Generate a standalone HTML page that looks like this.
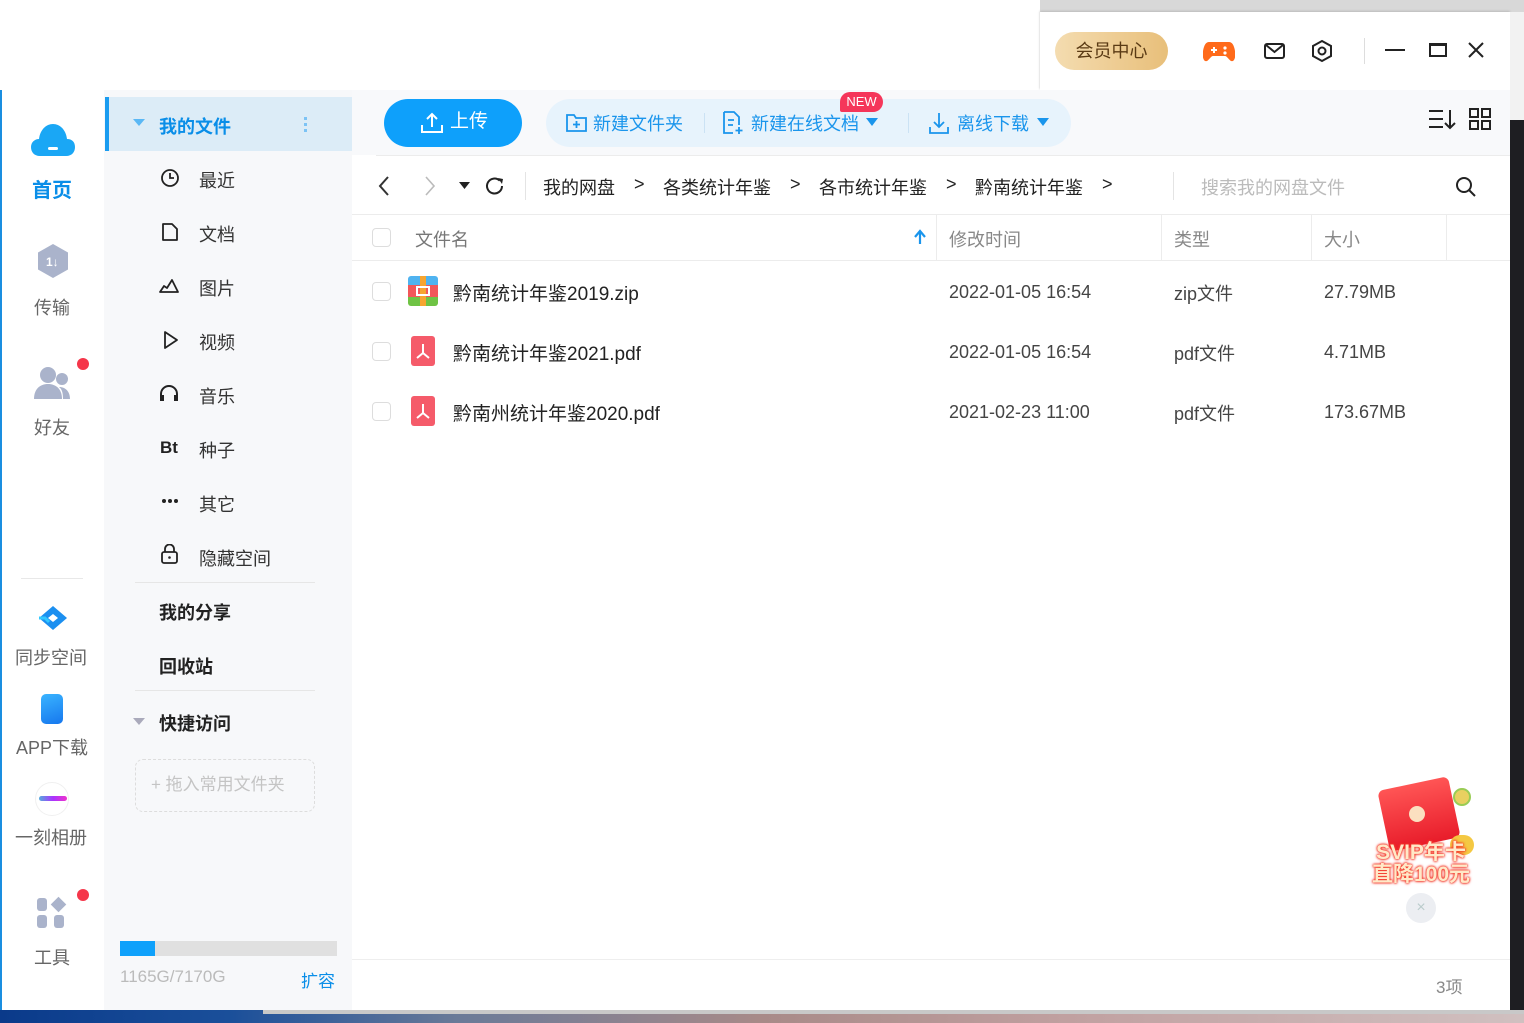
<!DOCTYPE html>
<html><head><meta charset="utf-8">
<style>
*{margin:0;padding:0;box-sizing:border-box}
body{width:1524px;height:1023px;overflow:hidden;background:#fff;font-family:"Liberation Sans","Noto Sans CJK SC",sans-serif;position:relative;color:#333}
.a{position:absolute;white-space:nowrap}
.f18{font-size:18px}
svg{position:absolute}
</style></head><body>
<!-- top area -->
<div class="a" style="left:1040px;top:0;width:484px;height:12px;background:#d8d8d8"></div>
<div class="a" style="left:1040px;top:12px;width:470px;height:78px;background:#fff;box-shadow:0 -1px 2px #bbb"></div>
<div class="a" style="left:1510px;top:12px;width:14px;height:110px;background:#f2f2f2"></div>
<div class="a" style="left:1510px;top:120px;width:14px;height:890px;background:#1e1e22"></div>
<div class="a" style="left:1055px;top:32px;width:113px;height:38px;border-radius:19px;background:linear-gradient(90deg,#f4dcb0,#e8bf7a);font-size:18px;line-height:38px;text-align:center;color:#5a3a14">会员中心</div>
<svg style="left:1203px;top:38px" width="32" height="26" viewBox="0 0 32 26"><path d="M6 4h20c3 0 5 3 6 9 1 7-1 11-4 10-2-1-4-5-6-5h-12c-2 0-4 4-6 5-3 1-5-3-4-10 1-6 3-9 6-9z" fill="#ff6a1a"/><path d="M8 12h6M11 9v6" stroke="#fff" stroke-width="2"/><circle cx="22" cy="10" r="1.6" fill="#fff"/><circle cx="22" cy="15" r="1.6" fill="#fff"/></svg>
<svg style="left:1264px;top:42px" width="22" height="18"><rect x="1" y="2" width="19" height="14" rx="2" fill="none" stroke="#222" stroke-width="2"/><path d="M2 3l8.5 7L19 3" fill="none" stroke="#222" stroke-width="2"/></svg>
<svg style="left:1310px;top:39px" width="24" height="24"><path d="M12 2l9 5v10l-9 5-9-5V7z" fill="none" stroke="#222" stroke-width="2"/><circle cx="12" cy="12" r="3.5" fill="none" stroke="#222" stroke-width="2"/></svg>
<div class="a" style="left:1364px;top:38px;width:1px;height:26px;background:#ddd"></div>
<div class="a" style="left:1385px;top:49px;width:20px;height:2px;background:#222"></div>
<div class="a" style="left:1429px;top:43px;width:18px;height:14px;border:2px solid #222;border-top-width:3px"></div>
<svg style="left:1467px;top:41px" width="18" height="18"><path d="M2 2l14 14M16 2L2 16" stroke="#222" stroke-width="2"/></svg>

<!-- left nav -->
<div class="a" style="left:0;top:90px;width:104px;height:920px;background:#fff;border-left:2px solid #1a8ee0"></div>
<svg style="left:30px;top:120px" width="46" height="40"><path d="M10 36c-6 0-9-4-9-9 0-5 4-8 8-8 1-9 7-15 14-15s13 6 14 15c5 0 8 3 8 8 0 5-3 9-9 9z" fill="#1aa7f5"/><rect x="18" y="27" width="10" height="3" rx="1.5" fill="#fff"/></svg>
<div class="a" style="left:32px;top:174px;font-size:20px;color:#0a8ee8;font-weight:bold">首页</div>
<svg style="left:35px;top:243px" width="36" height="36"><path d="M18 1l15 8.5v17L18 35 3 26.5v-17z" fill="#aab3cb"/><text x="11" y="23" fill="#fff" font-size="12" font-weight="bold" font-family="Liberation Sans">1↓</text></svg>
<div class="a f18" style="left:34px;top:294px;color:#666">传输</div>
<svg style="left:33px;top:365px" width="40" height="36"><circle cx="15" cy="10" r="8" fill="#aab3cb"/><path d="M1 34c0-10 6-15 14-15s14 5 14 15z" fill="#aab3cb"/><circle cx="29" cy="14" r="6" fill="#aab3cb"/><path d="M30 34c0-6-1-10-4-12 7 0 11 5 11 12z" fill="#aab3cb"/></svg>
<div class="a" style="left:77px;top:358px;width:12px;height:12px;border-radius:6px;background:#f5364a"></div>
<div class="a f18" style="left:34px;top:414px;color:#666">好友</div>
<div class="a" style="left:21px;top:578px;width:62px;height:1px;background:#e8e8e8"></div>
<svg style="left:37px;top:605px" width="32" height="26"><path d="M16 1l14 12-14 12L2 13z" fill="#1b8ff0"/><path d="M16 9l5 4-5 4-5-4z" fill="#fff"/><path d="M2 13l6 0 4 4" stroke="#33c8ff" stroke-width="3" fill="none"/></svg>
<div class="a f18" style="left:15px;top:644px;color:#666">同步空间</div>
<div class="a" style="left:41px;top:694px;width:22px;height:30px;border-radius:5px;background:linear-gradient(160deg,#3ab4ff,#1677ee)"></div>
<div class="a f18" style="left:16px;top:734px;color:#666">APP下载</div>
<div class="a" style="left:35px;top:782px;width:34px;height:34px;border-radius:17px;border:1px solid #f0f0f0"></div>
<div class="a" style="left:39px;top:796px;width:28px;height:5px;border-radius:3px;background:linear-gradient(90deg,#5ad,#a3f,#e3c)"></div>
<div class="a f18" style="left:15px;top:824px;color:#666">一刻相册</div>
<div class="a" style="left:37px;top:898px;width:10px;height:13px;border-radius:3px;background:#aab3cb"></div>
<div class="a" style="left:37px;top:915px;width:10px;height:13px;border-radius:3px;background:#aab3cb"></div>
<div class="a" style="left:54px;top:915px;width:10px;height:13px;border-radius:3px;background:#aab3cb"></div>
<div class="a" style="left:53px;top:899px;width:11px;height:11px;background:#aab3cb;transform:rotate(45deg)"></div>
<div class="a" style="left:77px;top:889px;width:12px;height:12px;border-radius:6px;background:#f5364a"></div>
<div class="a f18" style="left:34px;top:944px;color:#666">工具</div>

<!-- second sidebar -->
<div class="a" style="left:104px;top:90px;width:248px;height:920px;background:#f7f8fa"></div>
<div class="a" style="left:105px;top:97px;width:247px;height:54px;background:#dcecf7;border-left:4px solid #1a9cf0"></div>
<svg style="left:133px;top:119px" width="12" height="8"><path d="M0 0h12L6 7z" fill="#5bb8f5"/></svg>
<div class="a f18" style="left:159px;top:113px;color:#0a8ee8;font-weight:bold">我的文件</div>
<div class="a" style="left:304px;top:117px;width:3px;height:3px;background:#7cc3f5;box-shadow:0 6px #7cc3f5,0 12px #7cc3f5"></div>
<svg style="left:160px;top:168px" width="20" height="20"><circle cx="10" cy="10" r="8" fill="none" stroke="#222" stroke-width="1.8"/><path d="M10 5v5h4" fill="none" stroke="#222" stroke-width="1.8"/></svg>
<div class="a f18" style="left:199px;top:167px">最近</div>
<svg style="left:160px;top:222px" width="20" height="20"><path d="M3 2h9l5 5v11H3z" fill="none" stroke="#222" stroke-width="1.8" stroke-linejoin="round"/></svg>
<div class="a f18" style="left:199px;top:221px">文档</div>
<svg style="left:158px;top:277px" width="22" height="18"><path d="M2 15l4-6 3 2 5-8 6 12z" fill="none" stroke="#222" stroke-width="1.8" stroke-linejoin="round"/></svg>
<div class="a f18" style="left:199px;top:275px">图片</div>
<svg style="left:162px;top:330px" width="18" height="20"><path d="M3 2l12 8-12 8z" fill="none" stroke="#222" stroke-width="1.8" stroke-linejoin="round"/></svg>
<div class="a f18" style="left:199px;top:329px">视频</div>
<svg style="left:159px;top:384px" width="20" height="18"><path d="M2 16v-6a8 8 0 0116 0v6" fill="none" stroke="#222" stroke-width="2"/><rect x="1" y="11" width="4" height="6" fill="#222"/><rect x="15" y="11" width="4" height="6" fill="#222"/></svg>
<div class="a f18" style="left:199px;top:383px">音乐</div>
<div class="a" style="left:160px;top:438px;font-size:17px;font-weight:bold;color:#222">Bt</div>
<div class="a f18" style="left:199px;top:437px">种子</div>
<div class="a" style="left:162px;top:499px;width:4px;height:4px;border-radius:2px;background:#222;box-shadow:6px 0 #222,12px 0 #222"></div>
<div class="a f18" style="left:199px;top:491px">其它</div>
<svg style="left:160px;top:544px" width="20" height="20"><rect x="2" y="8" width="15" height="11" rx="2" fill="none" stroke="#222" stroke-width="1.8"/><path d="M5 8V5a4.5 4.5 0 019 0v3" fill="none" stroke="#222" stroke-width="1.8"/><circle cx="9.5" cy="13.5" r="1.3" fill="#222"/></svg>
<div class="a f18" style="left:199px;top:545px">隐藏空间</div>
<div class="a" style="left:135px;top:582px;width:180px;height:1px;background:#e6e6e6"></div>
<div class="a f18" style="left:159px;top:599px;font-weight:bold;color:#222">我的分享</div>
<div class="a f18" style="left:159px;top:653px;font-weight:bold;color:#222">回收站</div>
<div class="a" style="left:135px;top:690px;width:180px;height:1px;background:#e6e6e6"></div>
<svg style="left:133px;top:718px" width="12" height="8"><path d="M0 0h12L6 7z" fill="#aab"/></svg>
<div class="a f18" style="left:159px;top:710px;font-weight:bold;color:#222">快捷访问</div>
<div class="a" style="left:135px;top:759px;width:180px;height:53px;border:1.5px dashed #ddd;border-radius:8px;font-size:17px;color:#c4c4c4;line-height:50px;padding-left:15px">+ 拖入常用文件夹</div>
<div class="a" style="left:120px;top:941px;width:217px;height:15px;background:#e0e0e0"></div>
<div class="a" style="left:120px;top:941px;width:35px;height:15px;background:#0fa1fb"></div>
<div class="a" style="left:120px;top:967px;font-size:17px;color:#bbb">1165G/7170G</div>
<div class="a" style="left:301px;top:967px;font-size:17px;color:#0a8ee8">扩容</div>

<!-- main -->
<div class="a" style="left:352px;top:90px;width:1158px;height:65px;background:#f8f9fb"></div>
<div class="a" style="left:384px;top:99px;width:138px;height:48px;border-radius:24px;background:#0ea0fb;color:#fff;font-size:19px;line-height:46px;padding-left:66px">上传</div>
<svg style="left:420px;top:111px" width="24" height="24"><path d="M12 16V3M7 8l5-5 5 5M2 14v7h20v-7" fill="none" stroke="#fff" stroke-width="2"/></svg>
<div class="a" style="left:546px;top:99px;width:525px;height:48px;border-radius:24px;background:#e7f3fc"></div>
<svg style="left:565px;top:112px" width="24" height="22"><path d="M2 3h7l2 3h10v13H2z" fill="none" stroke="#1a95ec" stroke-width="1.8"/><path d="M11.5 9v7M8 12.5h7" stroke="#1a95ec" stroke-width="1.8"/></svg>
<div class="a f18" style="left:593px;top:110px;color:#1a95ec">新建文件夹</div>
<div class="a" style="left:704px;top:113px;width:1px;height:20px;background:#cbe2f4"></div>
<svg style="left:721px;top:110px" width="24" height="26"><path d="M3 2h10l5 5v8M3 2v21h9" fill="none" stroke="#1a95ec" stroke-width="1.8"/><path d="M7 10h6M7 15h5M18 17v7M14.5 20.5h7" stroke="#1a95ec" stroke-width="1.8"/></svg>
<div class="a f18" style="left:751px;top:110px;color:#1a95ec">新建在线文档</div>
<svg style="left:866px;top:118px" width="12" height="9"><path d="M0 0h12L6 8z" fill="#1a95ec"/></svg>
<div class="a" style="left:840px;top:92px;width:43px;height:20px;border-radius:10px 10px 10px 2px;background:#f5365a;color:#fff;font-size:13px;line-height:20px;text-align:center">NEW</div>
<div class="a" style="left:908px;top:113px;width:1px;height:20px;background:#cbe2f4"></div>
<svg style="left:927px;top:110px" width="24" height="26"><path d="M12 3v14M7 12l5 5 5-5M3 17v6h18v-6" fill="none" stroke="#1a95ec" stroke-width="1.8"/></svg>
<div class="a f18" style="left:957px;top:110px;color:#1a95ec">离线下载</div>
<svg style="left:1037px;top:118px" width="12" height="9"><path d="M0 0h12L6 8z" fill="#1a95ec"/></svg>
<svg style="left:1428px;top:108px" width="28" height="22"><path d="M1 3h14M1 11h14M1 19h14M22 2v18M17 15l5 5 5-5" fill="none" stroke="#222" stroke-width="2"/></svg>
<svg style="left:1469px;top:108px" width="22" height="22"><rect x="1" y="1" width="8" height="8" fill="none" stroke="#222" stroke-width="2"/><rect x="13" y="1" width="8" height="8" fill="none" stroke="#222" stroke-width="2"/><rect x="1" y="13" width="8" height="8" fill="none" stroke="#222" stroke-width="2"/><rect x="13" y="13" width="8" height="8" fill="none" stroke="#222" stroke-width="2"/></svg>
<div class="a" style="left:376px;top:155px;width:1134px;height:1px;background:#ececec"></div>

<!-- breadcrumb -->
<svg style="left:377px;top:175px" width="14" height="22"><path d="M11 2L3 11l8 9" fill="none" stroke="#333" stroke-width="2"/></svg>
<svg style="left:423px;top:175px" width="14" height="22"><path d="M3 2l8 9-8 9" fill="none" stroke="#bbb" stroke-width="1.6"/></svg>
<svg style="left:459px;top:182px" width="11" height="8"><path d="M0 0h11L5.5 7z" fill="#222"/></svg>
<svg style="left:484px;top:175px" width="22" height="22"><path d="M18 11a7.5 7.5 0 11-2.2-5.3" fill="none" stroke="#222" stroke-width="2"/><path d="M14 3l5 1-1 5z" fill="#222"/></svg>
<div class="a" style="left:525px;top:172px;width:1px;height:28px;background:#e4e4e4"></div>
<div class="a f18" style="left:543px;top:174px;color:#222">我的网盘</div>
<div class="a f18" style="left:634px;top:174px;color:#222">&gt;</div>
<div class="a f18" style="left:663px;top:174px;color:#222">各类统计年鉴</div>
<div class="a f18" style="left:790px;top:174px;color:#222">&gt;</div>
<div class="a f18" style="left:819px;top:174px;color:#222">各市统计年鉴</div>
<div class="a f18" style="left:946px;top:174px;color:#222">&gt;</div>
<div class="a f18" style="left:975px;top:174px;color:#222">黔南统计年鉴</div>
<div class="a f18" style="left:1102px;top:174px;color:#222">&gt;</div>
<div class="a" style="left:1173px;top:172px;width:1px;height:28px;background:#e4e4e4"></div>
<div class="a f18" style="left:1201px;top:174px;color:#bbb">搜索我的网盘文件</div>
<svg style="left:1455px;top:176px" width="22" height="22"><circle cx="9" cy="9" r="7" fill="none" stroke="#222" stroke-width="2"/><path d="M14 14l6 6" stroke="#222" stroke-width="2"/></svg>

<!-- table header -->
<div class="a" style="left:352px;top:214px;width:1158px;height:1px;background:#ececec"></div>
<div class="a" style="left:352px;top:260px;width:1158px;height:1px;background:#ececec"></div>
<div class="a" style="left:936px;top:215px;width:1px;height:45px;background:#ececec"></div>
<div class="a" style="left:1161px;top:215px;width:1px;height:45px;background:#ececec"></div>
<div class="a" style="left:1311px;top:215px;width:1px;height:45px;background:#ececec"></div>
<div class="a" style="left:1446px;top:215px;width:1px;height:45px;background:#ececec"></div>
<div class="a" style="left:372px;top:228px;width:19px;height:19px;border:1.5px solid #ddd;border-radius:4px"></div>
<div class="a f18" style="left:415px;top:226px;color:#777">文件名</div>
<svg style="left:914px;top:229px" width="12" height="16"><path d="M6 15V3M1 8l5-6 5 6" fill="none" stroke="#1a95ec" stroke-width="2.2"/></svg>
<div class="a f18" style="left:949px;top:226px;color:#888">修改时间</div>
<div class="a f18" style="left:1174px;top:226px;color:#888">类型</div>
<div class="a f18" style="left:1324px;top:226px;color:#888">大小</div>

<!-- rows -->
<div class="a" style="left:372px;top:282px;width:19px;height:19px;border:1.5px solid #ddd;border-radius:4px"></div>
<div class="a" style="left:408px;top:276px;width:30px;height:30px;border-radius:3px;background:linear-gradient(#4fb3f0 0 30%,#f2575a 30% 70%,#6fc344 70%)"></div>
<div class="a" style="left:420px;top:276px;width:6px;height:30px;background:#f7a530"></div>
<div class="a" style="left:416px;top:286px;width:14px;height:10px;border:2px solid #fff"></div>
<div class="a" style="left:453px;top:279px;font-size:19px;color:#222">黔南统计年鉴2019.zip</div>
<div class="a" style="left:949px;top:282px;font-size:18px;color:#444">2022-01-05 16:54</div>
<div class="a" style="left:1174px;top:280px;font-size:18px;color:#444">zip文件</div>
<div class="a" style="left:1324px;top:282px;font-size:18px;color:#444">27.79MB</div>

<div class="a" style="left:372px;top:342px;width:19px;height:19px;border:1.5px solid #ddd;border-radius:4px"></div>
<div class="a" style="left:411px;top:336px;width:24px;height:30px;border-radius:3px;background:#f55b6a"></div>
<svg style="left:414px;top:342px" width="18" height="18"><path d="M9 2v9M9 11l-6 5M9 11l6 5" stroke="#fff" stroke-width="2" fill="none"/></svg>
<div class="a" style="left:453px;top:339px;font-size:19px;color:#222">黔南统计年鉴2021.pdf</div>
<div class="a" style="left:949px;top:342px;font-size:18px;color:#444">2022-01-05 16:54</div>
<div class="a" style="left:1174px;top:340px;font-size:18px;color:#444">pdf文件</div>
<div class="a" style="left:1324px;top:342px;font-size:18px;color:#444">4.71MB</div>

<div class="a" style="left:372px;top:402px;width:19px;height:19px;border:1.5px solid #ddd;border-radius:4px"></div>
<div class="a" style="left:411px;top:396px;width:24px;height:30px;border-radius:3px;background:#f55b6a"></div>
<svg style="left:414px;top:402px" width="18" height="18"><path d="M9 2v9M9 11l-6 5M9 11l6 5" stroke="#fff" stroke-width="2" fill="none"/></svg>
<div class="a" style="left:453px;top:399px;font-size:19px;color:#222">黔南州统计年鉴2020.pdf</div>
<div class="a" style="left:949px;top:402px;font-size:18px;color:#444">2021-02-23 11:00</div>
<div class="a" style="left:1174px;top:400px;font-size:18px;color:#444">pdf文件</div>
<div class="a" style="left:1324px;top:402px;font-size:18px;color:#444">173.67MB</div>

<!-- promo -->
<div class="a" style="left:1383px;top:783px;width:72px;height:62px;border-radius:6px;background:linear-gradient(#ff5555,#e81c2a);transform:rotate(-12deg)"></div>
<div class="a" style="left:1409px;top:806px;width:16px;height:16px;border-radius:8px;background:#fbe0c0"></div>
<div class="a" style="left:1453px;top:788px;width:18px;height:18px;border-radius:9px;background:#e8d060;border:2px solid #9c5"></div>
<div class="a" style="left:1450px;top:835px;width:24px;height:20px;border-radius:10px;background:#f4c842"></div>
<div class="a" style="left:1368px;top:842px;font-size:21px;font-weight:bold;color:#ffe9c8;text-shadow:0 0 2px #f43c2c,0 0 2px #f43c2c,0 0 3px #f43c2c;line-height:22px;text-align:center;width:106px">SVIP年卡<br>直降100元</div>
<div class="a" style="left:1406px;top:893px;width:30px;height:30px;border-radius:15px;background:#eceef2;color:#bcc;text-align:center;line-height:30px;font-size:16px">×</div>

<!-- footer -->
<div class="a" style="left:352px;top:959px;width:1158px;height:1px;background:#eee"></div>
<div class="a" style="left:1436px;top:973px;font-size:17px;color:#888">3项</div>

<!-- desktop bottom -->
<div class="a" style="left:0;top:1010px;width:1524px;height:13px;background:linear-gradient(90deg,#0a3a8a 0,#1a4f9a 15%,#6a7a98 30%,#a88a88 50%,#c0a0a0 70%,#d0c0c0 100%)"></div>
<div class="a" style="left:263px;top:1010px;width:1261px;height:4px;background:#c8c8c8"></div>
</body></html>
